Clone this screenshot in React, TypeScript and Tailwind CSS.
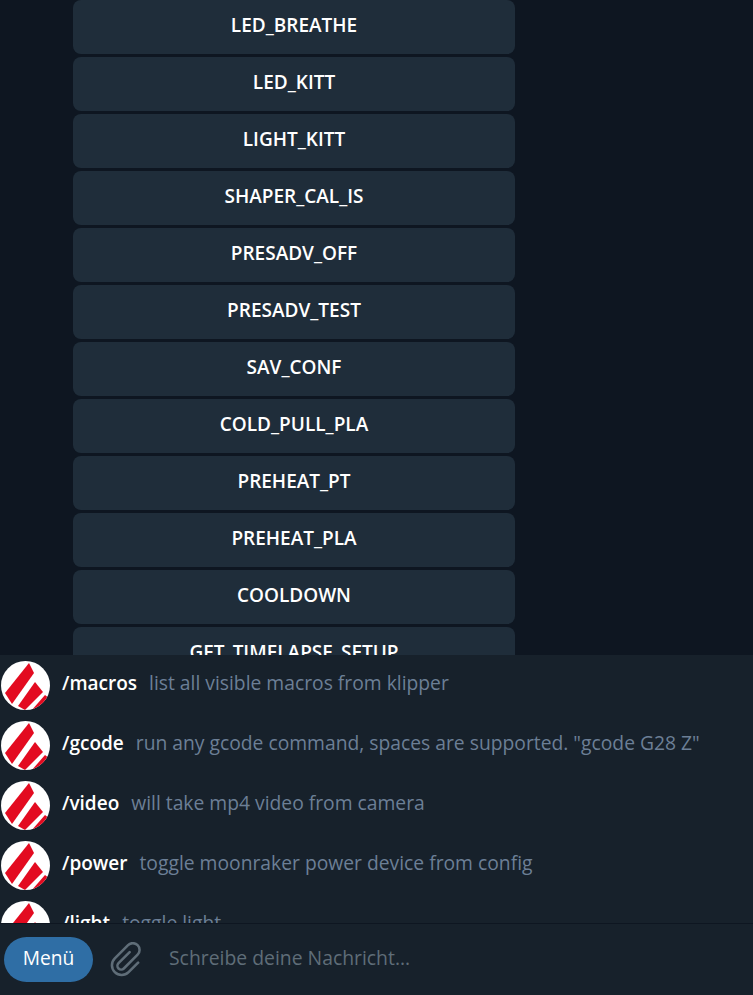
import React from 'react';

const macros = [
  'LED_BREATHE',
  'LED_KITT',
  'LIGHT_KITT',
  'SHAPER_CAL_IS',
  'PRESADV_OFF',
  'PRESADV_TEST',
  'SAV_CONF',
  'COLD_PULL_PLA',
  'PREHEAT_PT',
  'PREHEAT_PLA',
  'COOLDOWN',
  'GET_TIMELAPSE_SETUP',
];

const commands = [
  { name: '/macros', desc: 'list all visible macros from klipper' },
  { name: '/gcode', desc: 'run any gcode command, spaces are supported. "gcode G28 Z"' },
  { name: '/video', desc: 'will take mp4 video from camera' },
  { name: '/power', desc: 'toggle moonraker power device from config' },
  { name: '/light', desc: 'toggle light' },
];

function BotAvatar() {
  return (
    <svg width="49" height="49" viewBox="0 0 49 49" className="shrink-0">
      <circle cx="24.5" cy="24.5" r="24.5" fill="#ffffff" />
      <clipPath id="avatar-clip">
        <circle cx="24.5" cy="24.5" r="24.5" />
      </clipPath>
      <g clipPath="url(#avatar-clip)" fill="#e30b20">
        <path d="M28 2 L33 12 L11 43 L4 32 Z" />
        <path d="M34 21 L42 31 L24 49 L17 45 Z" />
        <path d="M44 34 L49 38 L36 52 L30 50 Z" />
      </g>
    </svg>
  );
}

export default function App() {
  return (
    <div className="w-[753px] h-[995px] overflow-hidden flex flex-col bg-[#0e1621] font-['Open_Sans','Noto_Sans',sans-serif]">
      <div className="h-[655px] shrink-0 overflow-hidden pl-[73px]">
        <div className="w-[442px] flex flex-col gap-[3px]">
          {macros.map((m) => (
            <div
              key={m}
              className="h-[54px] shrink-0 flex items-center justify-center rounded-lg bg-[#1f2d3a] text-white text-[19px] font-semibold pb-1"
            >
              {m}
            </div>
          ))}
        </div>
      </div>

      <div className="h-[268px] shrink-0 overflow-hidden bg-[#17212b] pt-[6px] pl-[1px] flex flex-col gap-[11px]">
        {commands.map((c) => (
          <div key={c.name} className="h-[49px] shrink-0 flex items-center">
            <BotAvatar />
            <span className="ml-3 pb-1 text-white text-[19px] font-semibold">{c.name}</span>
            <span className="ml-3 pb-[5px] text-[#6c7f96] text-[19.3px]">{c.desc}</span>
          </div>
        ))}
      </div>

      <div className="flex-1 flex items-center bg-[#17212b] border-t border-[#0e1621] pl-1">
        <div className="w-[89px] h-[45px] rounded-full bg-[#2f6ea5] flex items-center justify-center text-white text-[19.2px] font-medium pb-0.5">
          Menü
        </div>
        <svg width="36" height="36" viewBox="0 0 24 24" fill="none" stroke="#5f6d78" strokeWidth="1.7" strokeLinecap="round" strokeLinejoin="round" className="ml-[16px]">
          <g transform="rotate(45 12 12)">
            <path d="M9.5 7 V17.5 a2.5 2.5 0 0 0 5 0 V4.5 a4.5 4.5 0 0 0 -9 0 V17 a6.5 6.5 0 0 0 13 0 V8" />
          </g>
        </svg>
        <span className="ml-[24px] text-[#5f6d78] text-[19.36px] pb-1">Schreibe deine Nachricht...</span>
      </div>
    </div>
  );
}
